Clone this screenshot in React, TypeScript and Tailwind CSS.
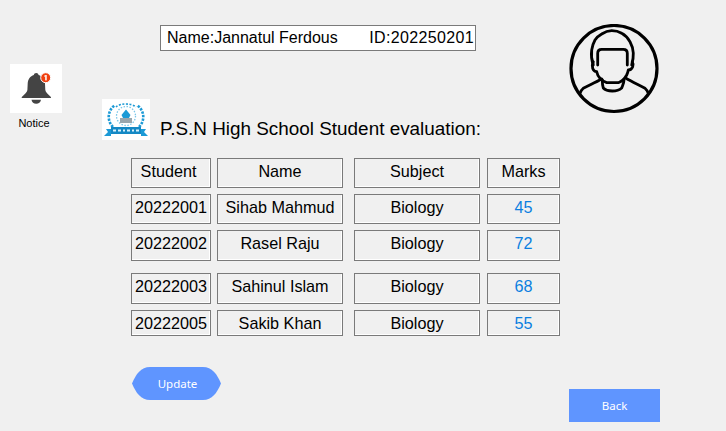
const font = "font-['Liberation_Sans',Arial,sans-serif]";
const cell = "flex items-center justify-center border border-[#7a7a7a] shadow-[inset_-1px_-1px_0_#ffffff] bg-[#f0f0f0] text-[16.2px] leading-none text-black shrink-0";

function Row({ vals, className, pad, first = "", blue = true }: { vals: string[]; className: string; pad: string; first?: string; blue?: boolean }) {
  return (
    <div className={`flex ${className}`}>
      <div className={`${cell} ${pad} ${first} w-[80px]`}>{vals[0]}</div>
      <div className={`${cell} ${pad} w-[126px] ml-[6px]`}>{vals[1]}</div>
      <div className={`${cell} ${pad} w-[126px] ml-[11px]`}>{vals[2]}</div>
      <div className={`${cell} ${pad} w-[73px] ml-[7px] ${blue ? "!text-[#0a7fe0]" : ""}`}>{vals[3]}</div>
    </div>
  );
}

function Bell() {
  return (
    <svg width="52" height="49" viewBox="0 0 52 49">
      <rect width="52" height="49" fill="#fff" />
      <path d="M26.200 9c1.300 0 2.200.8 2.400 2 3.800 1.100 6.200 4.200 6.400 8.500l.3 6.500c.2 2.500 3.300 4.800 5.600 7 .4.600.1 1-.7 1H12.500c-.8 0-1.100-.4-.7-1 2.300-2.200 5.400-4.500 5.600-7l.3-6.500c.2-4.300 2.600-7.400 6.100-8.500.2-1.200 1.100-2 2.400-2z" fill="#444444" />
      <path d="M21.500 35.800h9.500c-.4 2.500-2.300 3.900-4.800 3.900s-4.300-1.400-4.700-3.900z" fill="#444444" />
      <circle cx="35.700" cy="13.700" r="5" fill="#f0400f" stroke="#fff" strokeWidth="1" />
      <rect x="35.200" y="11" width="1.500" height="5.400" fill="#fff" />
      <rect x="34.200" y="11.500" width="1.200" height="1.100" fill="#fff" />
    </svg>
  );
}

function Logo() {
  return (
    <svg width="48" height="41" viewBox="0 0 48 41">
      <rect width="48" height="41" fill="#fff" />
      <g fill="none" stroke="#1c9ad6" strokeWidth="2.600" strokeDasharray="2.400 1.200">
        <path d="M11 28C5 22 5 12 13 6" />
        <path d="M37 28C43 22 43 12 35 6" />
      </g>
      <path d="M14 8C18 4 30 4 34 8" fill="none" stroke="#1c9ad6" strokeWidth="1.600" strokeDasharray="2 1.500" />
      <circle cx="24" cy="17" r="9.500" fill="none" stroke="#7cc6e8" strokeWidth="1.300" strokeDasharray="1.500 1.500" />
      <path d="M24 10.500l4.500 5.500-1.500 3h-6l-1.500-3z" fill="#1c9ad6" />
      <rect x="18" y="19" width="12" height="5" fill="#9aa6ad" />
      <path d="M4 30h40l-2 3 4 4h-7v-2H9v2H2l4-4z" fill="#1c9ad6" />
      <path d="M9 28h30v7H9z" fill="#1488c4" />
      <path d="M11 30.500h3v2h-3zM16 30.500h3v2h-3zM21 30.500h2v2h-2zM25 30.500h3v2h-3zM30 30.500h2v2h-2zM34 30.500h3v2h-3z" fill="#d8f0fb" />
    </svg>
  );
}

function Avatar() {
  return (
    <svg width="90" height="90" viewBox="0 0 90 90" fill="none" stroke="#000" strokeWidth="2.800" strokeLinejoin="round" strokeLinecap="round">
      <circle cx="45" cy="44.500" r="43" strokeWidth="3.200" />
      <path d="M24.300 41C22.500 36 22 31 22.700 26c.6-4 1.600-7 3.300-10 1.700-2.500 4-4.500 6.700-6 3-2 6.500-3.300 10-3.300s7 .8 10 2.600c3 1.600 6.200 4.800 8.300 8.400 2 3.500 3 7.300 3.300 11.300.2 4-.5 8-1.600 12" />
      <path d="M28.700 41V29.300c0-2.500 1.500-4 4-4h21.600c2.500 0 4 1.500 4 4V41" />
      <path d="M24.300 37.700c-1 2-1.200 4.500-.6 6.600.6 2 2.200 3.200 4 3.400 .5 2.500 1.600 4.800 3.300 6.600 2 2.200 4 3.600 6.700 4.400h11.600c3.500-1.200 6.400-4 8.400-7.700.8-1.600 1.300-3.300 1.600-5 2 0 3.500-1 4.400-3.300.6-2 .4-3.700-.4-5" />
      <path d="M33.300 56c0 3 0 5.500 1 8 2 2.300 5.500 3 9 3s7-.8 9.400-3c.9-2.500 2.300-5 2.300-8" />
      <path d="M32.700 55c-6 3.300-12 6-18.400 9.300-1.500 1.300-2.600 3-3.300 5" />
      <path d="M57 54.300c6 3.500 12.500 6.500 19 10 1.500 1.300 2.600 3 3.300 5" />
    </svg>
  );
}

export default function App() {
  return (
    <div className={`${font} w-[726px] h-[431px] bg-[#f0f0f0] overflow-hidden`}>
      <div className="flex h-[158px]">
        <div className="w-[102px] pt-[64px] pl-[10px]">
          <Bell />
          <div className="w-[48px] text-center text-[11px] leading-none mt-[5px] text-black">Notice</div>
        </div>
        <div className="w-[467px]">
          <div className="ml-[58px] mt-[25px] w-[316px] h-[26px] border border-[#7a7a7a] bg-white flex items-center justify-between pl-[6px] pr-[1px] text-[16px] leading-none text-black">
            <span>Name:Jannatul Ferdous</span>
            <span className="tracking-[0.35px]">ID:202250201</span>
          </div>
          <div className="flex mt-[48px]">
            <Logo />
            <div className="ml-[10px] mt-[21px] text-[18.900px] leading-none text-black whitespace-nowrap">P.S.N High School Student evaluation:</div>
          </div>
        </div>
        <div className="pt-[24px]">
          <Avatar />
        </div>
      </div>
      <div className="ml-[131px]">
        <Row className="h-[30px]" pad="pb-[3px]" first="pr-[5px]" blue={false} vals={["Student", "Name", "Subject", "Marks"]} />
        <Row className="h-[30px] mt-[6px]" pad="pb-[3px]" vals={["20222001", "Sihab Mahmud", "Biology", "45"]} />
        <Row className="h-[31px] mt-[6px]" pad="pb-[5px]" vals={["20222002", "Rasel Raju", "Biology", "72"]} />
        <Row className="h-[31px] mt-[12px]" pad="pb-[5px]" vals={["20222003", "Sahinul Islam", "Biology", "68"]} />
        <Row className="h-[26px] mt-[6px]" pad="pt-[1px]" vals={["20222005", "Sakib Khan", "Biology", "55"]} />
      </div>
      <div className="flex ml-[132px] mt-[31px]">
        <div className="w-[89px] h-[33px] pl-[2px] bg-[#5f95ff] [clip-path:path('M0_16.5C4_7_9_0_18_0H71C80_0_85_7_89_16.5C85_26_80_33_71_33H18C9_33_4_26_0_16.5Z')] flex items-center justify-center text-white text-[11.500px] font-['Noto_Sans',sans-serif] shrink-0">Update</div>
        <div className="ml-[348px] mt-[22px] w-[91px] h-[33px] bg-[#5f95ff] flex items-center justify-center text-white text-[11.500px] font-['Noto_Sans',sans-serif] shrink-0">Back</div>
      </div>
    </div>
  );
}
